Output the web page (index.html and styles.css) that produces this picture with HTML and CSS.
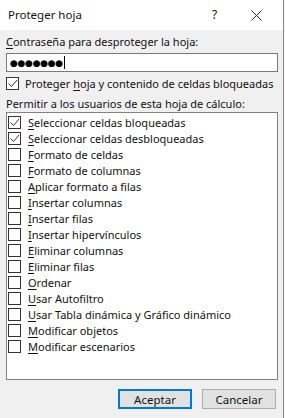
FILE: index.html
```html
<!DOCTYPE html>
<html lang="es">
<head>
<meta charset="utf-8">
<link rel="stylesheet" href="styles.css">
</head>
<body>
<div class="dialog">
  <div class="titlebar">
    <span class="title">Proteger hoja</span>
    <span class="help">?</span>
    <span class="close">
      <svg width="11" height="11" viewBox="0 0 11 11"><path d="M0.5 0.5 L10.5 10.5 M10.5 0.5 L0.5 10.5" stroke="#222" stroke-width="1" fill="none"/></svg>
    </span>
  </div>
  <div class="body">
    <div class="label"><u>C</u>ontraseña para desproteger la hoja:</div>
    <div class="input"><span class="dots">●●●●●●●</span><span class="caret"></span></div>
    <div class="row top-row">
      <span class="cb checked"><svg width="11" height="11" viewBox="0 0 11 11"><path d="M1.5 5.5 L4.5 8.5 L10 2" stroke="#333" stroke-width="1" fill="none"/></svg></span>
      <span>Proteger <u>h</u>oja y contenido de celdas bloqueadas</span>
    </div>
    <div class="label">Permitir a los usuarios de esta hoja de cálculo:</div>
    <div class="list">
      <div class="item"><span class="cb checked"><svg width="11" height="11" viewBox="0 0 11 11"><path d="M1.5 5.5 L4.5 8.5 L10 2" stroke="#333" stroke-width="1" fill="none"/></svg></span><span><u>S</u>eleccionar celdas bloqueadas</span></div>
      <div class="item"><span class="cb checked"><svg width="11" height="11" viewBox="0 0 11 11"><path d="M1.5 5.5 L4.5 8.5 L10 2" stroke="#333" stroke-width="1" fill="none"/></svg></span><span><u>S</u>eleccionar celdas desbloqueadas</span></div>
      <div class="item"><span class="cb"></span><span><u>F</u>ormato de celdas</span></div>
      <div class="item"><span class="cb"></span><span><u>F</u>ormato de columnas</span></div>
      <div class="item"><span class="cb"></span><span><u>A</u>plicar formato a filas</span></div>
      <div class="item"><span class="cb"></span><span><u>I</u>nsertar columnas</span></div>
      <div class="item"><span class="cb"></span><span><u>I</u>nsertar filas</span></div>
      <div class="item"><span class="cb"></span><span><u>I</u>nsertar hipervínculos</span></div>
      <div class="item"><span class="cb"></span><span><u>E</u>liminar columnas</span></div>
      <div class="item"><span class="cb"></span><span><u>E</u>liminar filas</span></div>
      <div class="item"><span class="cb"></span><span><u>O</u>rdenar</span></div>
      <div class="item"><span class="cb"></span><span><u>U</u>sar Autofiltro</span></div>
      <div class="item"><span class="cb"></span><span><u>U</u>sar Tabla dinámica y Gráfico dinámico</span></div>
      <div class="item"><span class="cb"></span><span><u>M</u>odificar objetos</span></div>
      <div class="item"><span class="cb"></span><span><u>M</u>odificar escenarios</span></div>
    </div>
    <div class="buttons">
      <button class="btn primary">Aceptar</button>
      <button class="btn">Cancelar</button>
    </div>
  </div>
</div>
</body>
</html>
```
FILE: styles.css
```css
html, body {
  margin: 0;
  padding: 0;
  background: #f4f4f4;
}
body {
  width: 285px;
  height: 418px;
  overflow: hidden;
  font-family: "Noto Sans", "DejaVu Sans", sans-serif;
  font-size: 11px;
  color: #111;
}
.dialog {
  width: 283px;
  height: 418px;
  border-right: 1px solid #8a8a8a;
  background: #f0f0f0;
  display: flex;
  flex-direction: column;
}
.titlebar {
  height: 30px;
  background: #fff;
  display: flex;
  align-items: center;
  padding-left: 8px;
  flex-shrink: 0;
}
.title {
  flex: 1;
  font-size: 11.5px;
  margin-top: -1px;
}
.help {
  width: 8px;
  font-size: 12px;
  margin-right: 31px;
  margin-top: -1px;
}
.close {
  display: flex;
  margin-right: 21px;
}
.body {
  padding: 4px 6px 0 6px;
  display: flex;
  flex-direction: column;
}
.label {
  line-height: 16px;
  height: 16px;
  white-space: nowrap;
}
u {
  text-decoration-thickness: 1px;
  text-underline-offset: 2px;
}
.input {
  margin-top: 3px;
  height: 17px;
  border: 1px solid #7a7a7a;
  background: #fff;
  display: flex;
  align-items: center;
  padding-left: 3px;
  width: 267px;
}
.dots {
  font-size: 9px;
  letter-spacing: -0.3px;
  color: #000;
}
.caret {
  width: 1px;
  height: 13px;
  background: #000;
  margin-left: 1px;
}
.row {
  display: flex;
  align-items: center;
  height: 16px;
  white-space: nowrap;
}
.top-row {
  margin-top: 3px;
  gap: 6px;
}
.top-row + .label {
  margin-top: 5px;
}
.cb {
  width: 11px;
  height: 11px;
  border: 1px solid #333;
  background: #fff;
  flex-shrink: 0;
  display: flex;
}
.list {
  width: 269px;
  height: 265px;
  border: 1px solid #828282;
  background: #fff;
  padding: 1px 0 0 1px;
  box-sizing: content-box;
  margin-top: 0;
}
.item {
  display: flex;
  align-items: center;
  gap: 7px;
  height: 16px;
  white-space: nowrap;
}
.buttons {
  display: flex;
  justify-content: flex-end;
  gap: 10px;
  margin-top: 9px;
  padding-right: 1px;
}
.btn {
  width: 74px;
  height: 20px;
  font-family: "Noto Sans", "DejaVu Sans", sans-serif;
  font-size: 11.5px;
  color: #111;
  background: #e1e1e1;
  border: 1px solid #adadad;
  padding: 0;
  margin: 0;
}
.btn.primary {
  border: 2px solid #0078d7;
}
```
